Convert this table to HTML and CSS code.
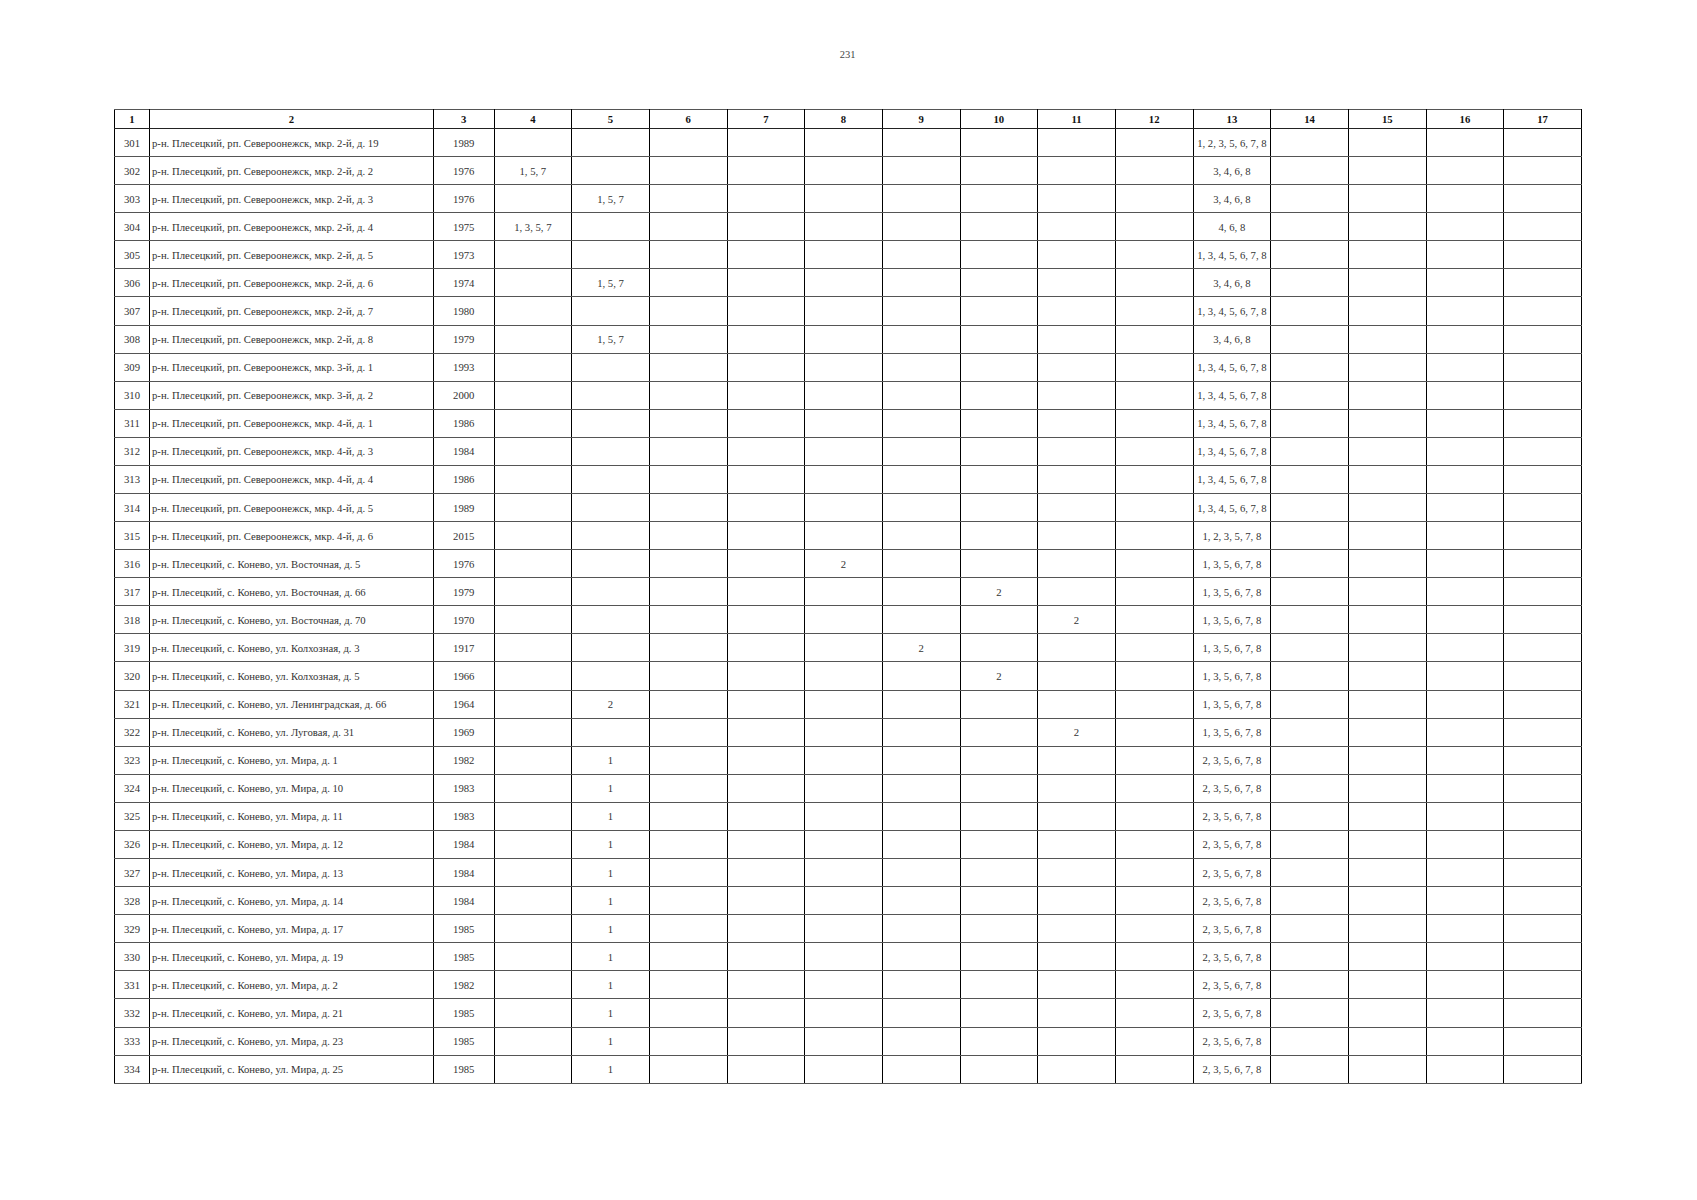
FILE: index.html
```html
<!DOCTYPE html>
<html lang="ru">
<head>
<meta charset="utf-8">
<title>231</title>
<link rel="stylesheet" href="styles.css">
</head>
<body>
<div class="page">
<div class="pagenum">231</div>
<table class="grid">
<colgroup>
<col class="c1"><col class="c2"><col class="c3">
<col class="cn"><col class="cn"><col class="cn"><col class="cn"><col class="cn"><col class="cn"><col class="cn"><col class="cn"><col class="cn"><col class="cn"><col class="cn"><col class="cn"><col class="cn"><col class="cn">
</colgroup>
<thead>
<tr><th>1</th><th>2</th><th>3</th><th>4</th><th>5</th><th>6</th><th>7</th><th>8</th><th>9</th><th>10</th><th>11</th><th>12</th><th>13</th><th>14</th><th>15</th><th>16</th><th>17</th></tr>
</thead>
<tbody>
<tr><td>301</td><td class="addr">р-н. Плесецкий, рп. Североонежск, мкр. 2-й, д. 19</td><td>1989</td><td></td><td></td><td></td><td></td><td></td><td></td><td></td><td></td><td></td><td>1, 2, 3, 5, 6, 7, 8</td><td></td><td></td><td></td><td></td></tr>
<tr><td>302</td><td class="addr">р-н. Плесецкий, рп. Североонежск, мкр. 2-й, д. 2</td><td>1976</td><td>1, 5, 7</td><td></td><td></td><td></td><td></td><td></td><td></td><td></td><td></td><td>3, 4, 6, 8</td><td></td><td></td><td></td><td></td></tr>
<tr><td>303</td><td class="addr">р-н. Плесецкий, рп. Североонежск, мкр. 2-й, д. 3</td><td>1976</td><td></td><td>1, 5, 7</td><td></td><td></td><td></td><td></td><td></td><td></td><td></td><td>3, 4, 6, 8</td><td></td><td></td><td></td><td></td></tr>
<tr><td>304</td><td class="addr">р-н. Плесецкий, рп. Североонежск, мкр. 2-й, д. 4</td><td>1975</td><td>1, 3, 5, 7</td><td></td><td></td><td></td><td></td><td></td><td></td><td></td><td></td><td>4, 6, 8</td><td></td><td></td><td></td><td></td></tr>
<tr><td>305</td><td class="addr">р-н. Плесецкий, рп. Североонежск, мкр. 2-й, д. 5</td><td>1973</td><td></td><td></td><td></td><td></td><td></td><td></td><td></td><td></td><td></td><td>1, 3, 4, 5, 6, 7, 8</td><td></td><td></td><td></td><td></td></tr>
<tr><td>306</td><td class="addr">р-н. Плесецкий, рп. Североонежск, мкр. 2-й, д. 6</td><td>1974</td><td></td><td>1, 5, 7</td><td></td><td></td><td></td><td></td><td></td><td></td><td></td><td>3, 4, 6, 8</td><td></td><td></td><td></td><td></td></tr>
<tr><td>307</td><td class="addr">р-н. Плесецкий, рп. Североонежск, мкр. 2-й, д. 7</td><td>1980</td><td></td><td></td><td></td><td></td><td></td><td></td><td></td><td></td><td></td><td>1, 3, 4, 5, 6, 7, 8</td><td></td><td></td><td></td><td></td></tr>
<tr><td>308</td><td class="addr">р-н. Плесецкий, рп. Североонежск, мкр. 2-й, д. 8</td><td>1979</td><td></td><td>1, 5, 7</td><td></td><td></td><td></td><td></td><td></td><td></td><td></td><td>3, 4, 6, 8</td><td></td><td></td><td></td><td></td></tr>
<tr><td>309</td><td class="addr">р-н. Плесецкий, рп. Североонежск, мкр. 3-й, д. 1</td><td>1993</td><td></td><td></td><td></td><td></td><td></td><td></td><td></td><td></td><td></td><td>1, 3, 4, 5, 6, 7, 8</td><td></td><td></td><td></td><td></td></tr>
<tr><td>310</td><td class="addr">р-н. Плесецкий, рп. Североонежск, мкр. 3-й, д. 2</td><td>2000</td><td></td><td></td><td></td><td></td><td></td><td></td><td></td><td></td><td></td><td>1, 3, 4, 5, 6, 7, 8</td><td></td><td></td><td></td><td></td></tr>
<tr><td>311</td><td class="addr">р-н. Плесецкий, рп. Североонежск, мкр. 4-й, д. 1</td><td>1986</td><td></td><td></td><td></td><td></td><td></td><td></td><td></td><td></td><td></td><td>1, 3, 4, 5, 6, 7, 8</td><td></td><td></td><td></td><td></td></tr>
<tr><td>312</td><td class="addr">р-н. Плесецкий, рп. Североонежск, мкр. 4-й, д. 3</td><td>1984</td><td></td><td></td><td></td><td></td><td></td><td></td><td></td><td></td><td></td><td>1, 3, 4, 5, 6, 7, 8</td><td></td><td></td><td></td><td></td></tr>
<tr><td>313</td><td class="addr">р-н. Плесецкий, рп. Североонежск, мкр. 4-й, д. 4</td><td>1986</td><td></td><td></td><td></td><td></td><td></td><td></td><td></td><td></td><td></td><td>1, 3, 4, 5, 6, 7, 8</td><td></td><td></td><td></td><td></td></tr>
<tr><td>314</td><td class="addr">р-н. Плесецкий, рп. Североонежск, мкр. 4-й, д. 5</td><td>1989</td><td></td><td></td><td></td><td></td><td></td><td></td><td></td><td></td><td></td><td>1, 3, 4, 5, 6, 7, 8</td><td></td><td></td><td></td><td></td></tr>
<tr><td>315</td><td class="addr">р-н. Плесецкий, рп. Североонежск, мкр. 4-й, д. 6</td><td>2015</td><td></td><td></td><td></td><td></td><td></td><td></td><td></td><td></td><td></td><td>1, 2, 3, 5, 7, 8</td><td></td><td></td><td></td><td></td></tr>
<tr><td>316</td><td class="addr">р-н. Плесецкий, с. Конево, ул. Восточная, д. 5</td><td>1976</td><td></td><td></td><td></td><td></td><td>2</td><td></td><td></td><td></td><td></td><td>1, 3, 5, 6, 7, 8</td><td></td><td></td><td></td><td></td></tr>
<tr><td>317</td><td class="addr">р-н. Плесецкий, с. Конево, ул. Восточная, д. 66</td><td>1979</td><td></td><td></td><td></td><td></td><td></td><td></td><td>2</td><td></td><td></td><td>1, 3, 5, 6, 7, 8</td><td></td><td></td><td></td><td></td></tr>
<tr><td>318</td><td class="addr">р-н. Плесецкий, с. Конево, ул. Восточная, д. 70</td><td>1970</td><td></td><td></td><td></td><td></td><td></td><td></td><td></td><td>2</td><td></td><td>1, 3, 5, 6, 7, 8</td><td></td><td></td><td></td><td></td></tr>
<tr><td>319</td><td class="addr">р-н. Плесецкий, с. Конево, ул. Колхозная, д. 3</td><td>1917</td><td></td><td></td><td></td><td></td><td></td><td>2</td><td></td><td></td><td></td><td>1, 3, 5, 6, 7, 8</td><td></td><td></td><td></td><td></td></tr>
<tr><td>320</td><td class="addr">р-н. Плесецкий, с. Конево, ул. Колхозная, д. 5</td><td>1966</td><td></td><td></td><td></td><td></td><td></td><td></td><td>2</td><td></td><td></td><td>1, 3, 5, 6, 7, 8</td><td></td><td></td><td></td><td></td></tr>
<tr><td>321</td><td class="addr">р-н. Плесецкий, с. Конево, ул. Ленинградская, д. 66</td><td>1964</td><td></td><td>2</td><td></td><td></td><td></td><td></td><td></td><td></td><td></td><td>1, 3, 5, 6, 7, 8</td><td></td><td></td><td></td><td></td></tr>
<tr><td>322</td><td class="addr">р-н. Плесецкий, с. Конево, ул. Луговая, д. 31</td><td>1969</td><td></td><td></td><td></td><td></td><td></td><td></td><td></td><td>2</td><td></td><td>1, 3, 5, 6, 7, 8</td><td></td><td></td><td></td><td></td></tr>
<tr><td>323</td><td class="addr">р-н. Плесецкий, с. Конево, ул. Мира, д. 1</td><td>1982</td><td></td><td>1</td><td></td><td></td><td></td><td></td><td></td><td></td><td></td><td>2, 3, 5, 6, 7, 8</td><td></td><td></td><td></td><td></td></tr>
<tr><td>324</td><td class="addr">р-н. Плесецкий, с. Конево, ул. Мира, д. 10</td><td>1983</td><td></td><td>1</td><td></td><td></td><td></td><td></td><td></td><td></td><td></td><td>2, 3, 5, 6, 7, 8</td><td></td><td></td><td></td><td></td></tr>
<tr><td>325</td><td class="addr">р-н. Плесецкий, с. Конево, ул. Мира, д. 11</td><td>1983</td><td></td><td>1</td><td></td><td></td><td></td><td></td><td></td><td></td><td></td><td>2, 3, 5, 6, 7, 8</td><td></td><td></td><td></td><td></td></tr>
<tr><td>326</td><td class="addr">р-н. Плесецкий, с. Конево, ул. Мира, д. 12</td><td>1984</td><td></td><td>1</td><td></td><td></td><td></td><td></td><td></td><td></td><td></td><td>2, 3, 5, 6, 7, 8</td><td></td><td></td><td></td><td></td></tr>
<tr><td>327</td><td class="addr">р-н. Плесецкий, с. Конево, ул. Мира, д. 13</td><td>1984</td><td></td><td>1</td><td></td><td></td><td></td><td></td><td></td><td></td><td></td><td>2, 3, 5, 6, 7, 8</td><td></td><td></td><td></td><td></td></tr>
<tr><td>328</td><td class="addr">р-н. Плесецкий, с. Конево, ул. Мира, д. 14</td><td>1984</td><td></td><td>1</td><td></td><td></td><td></td><td></td><td></td><td></td><td></td><td>2, 3, 5, 6, 7, 8</td><td></td><td></td><td></td><td></td></tr>
<tr><td>329</td><td class="addr">р-н. Плесецкий, с. Конево, ул. Мира, д. 17</td><td>1985</td><td></td><td>1</td><td></td><td></td><td></td><td></td><td></td><td></td><td></td><td>2, 3, 5, 6, 7, 8</td><td></td><td></td><td></td><td></td></tr>
<tr><td>330</td><td class="addr">р-н. Плесецкий, с. Конево, ул. Мира, д. 19</td><td>1985</td><td></td><td>1</td><td></td><td></td><td></td><td></td><td></td><td></td><td></td><td>2, 3, 5, 6, 7, 8</td><td></td><td></td><td></td><td></td></tr>
<tr><td>331</td><td class="addr">р-н. Плесецкий, с. Конево, ул. Мира, д. 2</td><td>1982</td><td></td><td>1</td><td></td><td></td><td></td><td></td><td></td><td></td><td></td><td>2, 3, 5, 6, 7, 8</td><td></td><td></td><td></td><td></td></tr>
<tr><td>332</td><td class="addr">р-н. Плесецкий, с. Конево, ул. Мира, д. 21</td><td>1985</td><td></td><td>1</td><td></td><td></td><td></td><td></td><td></td><td></td><td></td><td>2, 3, 5, 6, 7, 8</td><td></td><td></td><td></td><td></td></tr>
<tr><td>333</td><td class="addr">р-н. Плесецкий, с. Конево, ул. Мира, д. 23</td><td>1985</td><td></td><td>1</td><td></td><td></td><td></td><td></td><td></td><td></td><td></td><td>2, 3, 5, 6, 7, 8</td><td></td><td></td><td></td><td></td></tr>
<tr><td>334</td><td class="addr">р-н. Плесецкий, с. Конево, ул. Мира, д. 25</td><td>1985</td><td></td><td>1</td><td></td><td></td><td></td><td></td><td></td><td></td><td></td><td>2, 3, 5, 6, 7, 8</td><td></td><td></td><td></td><td></td></tr>
</tbody>
</table>
</div>
</body>
</html>
```

FILE: styles.css
```css
html, body {
  margin: 0;
  padding: 0;
  background: #fff;
}
body {
  font-family: "Liberation Serif", "Times New Roman", serif;
  color: #333;
}
.page {
  width: 1697px;
  height: 1200px;
  padding: 48px 0 0 114px;
  box-sizing: border-box;
}
.pagenum {
  width: 1467px;
  text-align: center;
  font-size: 10.5px;
  line-height: 14px;
  color: #444;
  margin-bottom: 47px;
}
.grid {
  border-collapse: collapse;
  table-layout: fixed;
  width: 1467px;
  border: 1.5px solid #111;
}
.c1 { width: 35px; }
.c2 { width: 284px; }
.c3 { width: 60.5px; }
.cn { width: 77.68px; }
.grid th, .grid td {
  border-left: 1px solid #000;
  border-right: 1px solid #000;
  border-top: 1px solid #555;
  border-bottom: 1px solid #555;
  text-align: center;
  vertical-align: middle;
  padding: 0;
  font-size: 10.7px;
  white-space: nowrap;
  overflow: hidden;
}
.grid th {
  height: 18px;
  font-weight: bold;
  color: #111;
  border-bottom: 1px solid #222;
}
.grid td {
  height: 27.08px;
}
.grid td.addr {
  text-align: left;
  padding-left: 2px;
}
```
